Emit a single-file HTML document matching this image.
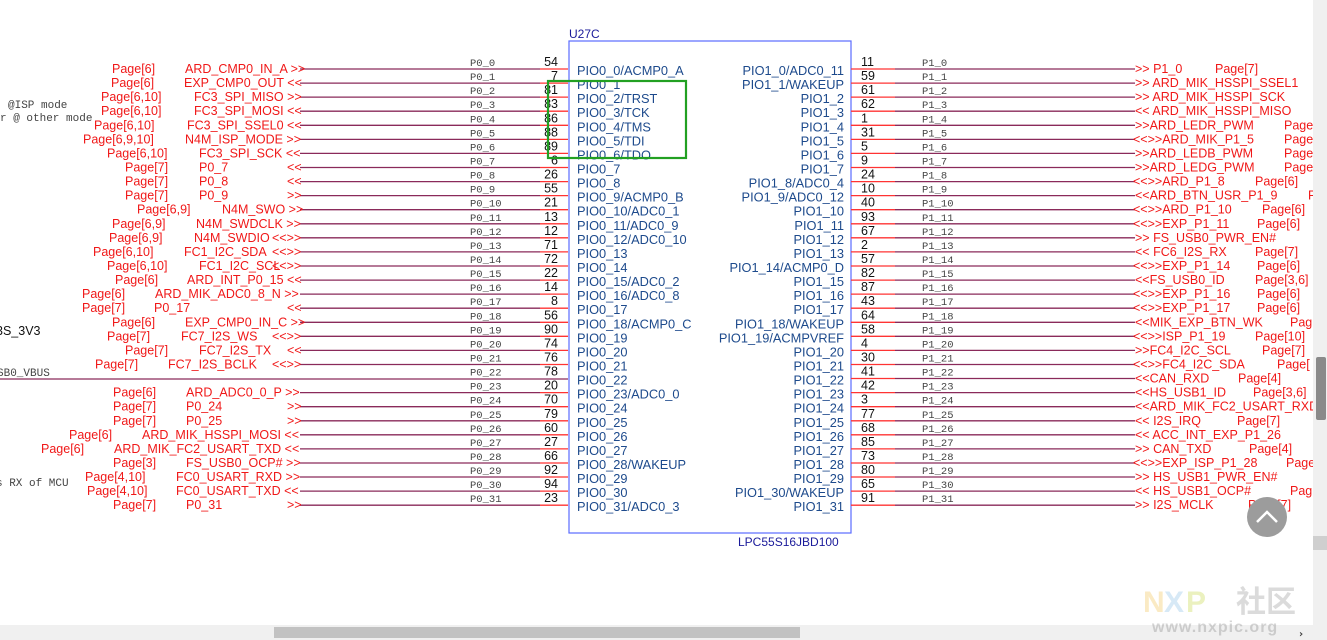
<!DOCTYPE html>
<html><head><meta charset="utf-8"><style>
html,body{margin:0;padding:0;width:1327px;height:640px;overflow:hidden;background:#fff}
svg{position:absolute;left:0;top:0}
.r{fill:#f01818;font:12.5px "Liberation Sans",sans-serif}
.n{fill:#111;font:12.5px "Liberation Sans",sans-serif}
.b{fill:#1d4a8c;font:12.8px "Liberation Sans",sans-serif}
.m{fill:#444;font:10.5px "Liberation Mono",monospace}
.e{text-anchor:end}
</style></head><body>
<svg width="1327" height="640" viewBox="0 0 1327 640">
<defs>
<g id="L"><line x1="300" y1="0" x2="540" y2="0" stroke="#8a2a5a" stroke-width="1.3"/><line x1="540" y1="0" x2="568" y2="0" stroke="#f33" stroke-width="1.3"/></g>
<g id="R"><line x1="851" y1="0" x2="895" y2="0" stroke="#f33" stroke-width="1.3"/><line x1="895" y1="0" x2="1135" y2="0" stroke="#8a2a5a" stroke-width="1.3"/></g>
</defs>
<text class="m" x="8" y="108" style="font-size:11px">@ISP mode</text>
<text class="m" x="0" y="121" style="font-size:11px">r @ other mode</text>
<text class="n" x="-4" y="335">3S_3V3</text>
<text class="m" x="-3" y="376" style="font-size:11px">SB0_VBUS</text>
<line x1="0" y1="379" x2="568" y2="379" stroke="#8a2a5a" stroke-width="1.3"/>
<text class="m" x="-4" y="486" style="font-size:11px">s RX of MCU</text>
<rect x="569" y="41" width="282" height="492" fill="none" stroke="#5a6cff" stroke-width="1.2"/>
<text x="569" y="38" style="fill:#1a1a9a;font:12px 'Liberation Sans',sans-serif">U27C</text>
<text x="738" y="546" style="fill:#1a1a9a;font:12px 'Liberation Sans',sans-serif">LPC55S16JBD100</text>

<g transform="translate(0,69)"><use href="#L"/><text class="r" x="112" y="4">Page[6]</text><text class="r" x="185" y="4">ARD_CMP0_IN_A &gt;&gt;</text><text class="m" x="470" y="-3">P0_0</text><text class="n e" x="558" y="-3">54</text><text class="b" x="577" y="6">PIO0_0/ACMP0_A</text>
<use href="#R"/><text class="n" x="861" y="-3">11</text><text class="m" x="922" y="-3">P1_0</text><text class="b e" x="844" y="6">PIO1_0/ADC0_11</text><text class="r" x="1135" y="4">&gt;&gt;   P1_0</text><text class="r" x="1215" y="4">Page[7]</text></g>
<g transform="translate(0,83.1)"><use href="#L"/><text class="r" x="111" y="4">Page[6]</text><text class="r" x="184" y="4">EXP_CMP0_OUT &lt;&lt;</text><text class="m" x="470" y="-3">P0_1</text><text class="n e" x="558" y="-3">7</text><text class="b" x="577" y="6">PIO0_1</text>
<use href="#R"/><text class="n" x="861" y="-3">59</text><text class="m" x="922" y="-3">P1_1</text><text class="b e" x="844" y="6">PIO1_1/WAKEUP</text><text class="r" x="1135" y="4">&gt;&gt;  ARD_MIK_HSSPI_SSEL1</text></g>
<g transform="translate(0,97.1)"><use href="#L"/><text class="r" x="101" y="4">Page[6,10]</text><text class="r" x="194" y="4">FC3_SPI_MISO &gt;&gt;</text><text class="m" x="470" y="-3">P0_2</text><text class="n e" x="558" y="-3">81</text><text class="b" x="577" y="6">PIO0_2/TRST</text>
<use href="#R"/><text class="n" x="861" y="-3">61</text><text class="m" x="922" y="-3">P1_2</text><text class="b e" x="844" y="6">PIO1_2</text><text class="r" x="1135" y="4">&gt;&gt;  ARD_MIK_HSSPI_SCK</text></g>
<g transform="translate(0,111.2)"><use href="#L"/><text class="r" x="101" y="4">Page[6,10]</text><text class="r" x="194" y="4">FC3_SPI_MOSI &lt;&lt;</text><text class="m" x="470" y="-3">P0_3</text><text class="n e" x="558" y="-3">83</text><text class="b" x="577" y="6">PIO0_3/TCK</text>
<use href="#R"/><text class="n" x="861" y="-3">62</text><text class="m" x="922" y="-3">P1_3</text><text class="b e" x="844" y="6">PIO1_3</text><text class="r" x="1135" y="4">&lt;&lt;  ARD_MIK_HSSPI_MISO</text></g>
<g transform="translate(0,125.3)"><use href="#L"/><text class="r" x="94" y="4">Page[6,10]</text><text class="r" x="187" y="4">FC3_SPI_SSEL0 &lt;&lt;</text><text class="m" x="470" y="-3">P0_4</text><text class="n e" x="558" y="-3">86</text><text class="b" x="577" y="6">PIO0_4/TMS</text>
<use href="#R"/><text class="n" x="861" y="-3">1</text><text class="m" x="922" y="-3">P1_4</text><text class="b e" x="844" y="6">PIO1_4</text><text class="r" x="1135" y="4">&gt;&gt;ARD_LEDR_PWM</text><text class="r" x="1284" y="4">Page[</text></g>
<g transform="translate(0,139.4)"><use href="#L"/><text class="r" x="83" y="4">Page[6,9,10]</text><text class="r" x="185" y="4">N4M_ISP_MODE &gt;&gt;</text><text class="m" x="470" y="-3">P0_5</text><text class="n e" x="558" y="-3">88</text><text class="b" x="577" y="6">PIO0_5/TDI</text>
<use href="#R"/><text class="n" x="861" y="-3">31</text><text class="m" x="922" y="-3">P1_5</text><text class="b e" x="844" y="6">PIO1_5</text><text class="r" x="1133" y="4">&lt;&lt;&gt;&gt;ARD_MIK_P1_5</text><text class="r" x="1284" y="4">Page[</text></g>
<g transform="translate(0,153.4)"><use href="#L"/><text class="r" x="107" y="4">Page[6,10]</text><text class="r" x="199" y="4">FC3_SPI_SCK &lt;&lt;</text><text class="m" x="470" y="-3">P0_6</text><text class="n e" x="558" y="-3">89</text><text class="b" x="577" y="6">PIO0_6/TDO</text>
<use href="#R"/><text class="n" x="861" y="-3">5</text><text class="m" x="922" y="-3">P1_6</text><text class="b e" x="844" y="6">PIO1_6</text><text class="r" x="1135" y="4">&gt;&gt;ARD_LEDB_PWM</text><text class="r" x="1284" y="4">Page[</text></g>
<g transform="translate(0,167.5)"><use href="#L"/><text class="r" x="125" y="4">Page[7]</text><text class="r" x="199" y="4">P0_7</text><text class="r" x="287" y="4">&lt;&lt;</text><text class="m" x="470" y="-3">P0_7</text><text class="n e" x="558" y="-3">6</text><text class="b" x="577" y="6">PIO0_7</text>
<use href="#R"/><text class="n" x="861" y="-3">9</text><text class="m" x="922" y="-3">P1_7</text><text class="b e" x="844" y="6">PIO1_7</text><text class="r" x="1135" y="4">&gt;&gt;ARD_LEDG_PWM</text><text class="r" x="1284" y="4">Page[</text></g>
<g transform="translate(0,181.6)"><use href="#L"/><text class="r" x="125" y="4">Page[7]</text><text class="r" x="199" y="4">P0_8</text><text class="r" x="287" y="4">&lt;&lt;</text><text class="m" x="470" y="-3">P0_8</text><text class="n e" x="558" y="-3">26</text><text class="b" x="577" y="6">PIO0_8</text>
<use href="#R"/><text class="n" x="861" y="-3">24</text><text class="m" x="922" y="-3">P1_8</text><text class="b e" x="844" y="6">PIO1_8/ADC0_4</text><text class="r" x="1133" y="4">&lt;&lt;&gt;&gt;ARD_P1_8</text><text class="r" x="1255" y="4">Page[6]</text></g>
<g transform="translate(0,195.6)"><use href="#L"/><text class="r" x="125" y="4">Page[7]</text><text class="r" x="199" y="4">P0_9</text><text class="r" x="287" y="4">&gt;&gt;</text><text class="m" x="470" y="-3">P0_9</text><text class="n e" x="558" y="-3">55</text><text class="b" x="577" y="6">PIO0_9/ACMP0_B</text>
<use href="#R"/><text class="n" x="861" y="-3">10</text><text class="m" x="922" y="-3">P1_9</text><text class="b e" x="844" y="6">PIO1_9/ADC0_12</text><text class="r" x="1135" y="4">&lt;&lt;ARD_BTN_USR_P1_9</text><text class="r" x="1308" y="4">P</text></g>
<g transform="translate(0,209.7)"><use href="#L"/><text class="r" x="137" y="4">Page[6,9]</text><text class="r" x="222" y="4">N4M_SWO &gt;&gt;</text><text class="m" x="470" y="-3">P0_10</text><text class="n e" x="558" y="-3">21</text><text class="b" x="577" y="6">PIO0_10/ADC0_1</text>
<use href="#R"/><text class="n" x="861" y="-3">40</text><text class="m" x="922" y="-3">P1_10</text><text class="b e" x="844" y="6">PIO1_10</text><text class="r" x="1133" y="4">&lt;&lt;&gt;&gt;ARD_P1_10</text><text class="r" x="1262" y="4">Page[6]</text></g>
<g transform="translate(0,223.8)"><use href="#L"/><text class="r" x="112" y="4">Page[6,9]</text><text class="r" x="196" y="4">N4M_SWDCLK &gt;&gt;</text><text class="m" x="470" y="-3">P0_11</text><text class="n e" x="558" y="-3">13</text><text class="b" x="577" y="6">PIO0_11/ADC0_9</text>
<use href="#R"/><text class="n" x="861" y="-3">93</text><text class="m" x="922" y="-3">P1_11</text><text class="b e" x="844" y="6">PIO1_11</text><text class="r" x="1133" y="4">&lt;&lt;&gt;&gt;EXP_P1_11</text><text class="r" x="1257" y="4">Page[6]</text></g>
<g transform="translate(0,237.8)"><use href="#L"/><text class="r" x="109" y="4">Page[6,9]</text><text class="r" x="194" y="4">N4M_SWDIO</text><text class="r" x="272" y="4">&lt;&lt;&gt;&gt;</text><text class="m" x="470" y="-3">P0_12</text><text class="n e" x="558" y="-3">12</text><text class="b" x="577" y="6">PIO0_12/ADC0_10</text>
<use href="#R"/><text class="n" x="861" y="-3">67</text><text class="m" x="922" y="-3">P1_12</text><text class="b e" x="844" y="6">PIO1_12</text><text class="r" x="1135" y="4">&gt;&gt;  FS_USB0_PWR_EN#</text></g>
<g transform="translate(0,251.9)"><use href="#L"/><text class="r" x="93" y="4">Page[6,10]</text><text class="r" x="184" y="4">FC1_I2C_SDA</text><text class="r" x="272" y="4">&lt;&lt;&gt;&gt;</text><text class="m" x="470" y="-3">P0_13</text><text class="n e" x="558" y="-3">71</text><text class="b" x="577" y="6">PIO0_13</text>
<use href="#R"/><text class="n" x="861" y="-3">2</text><text class="m" x="922" y="-3">P1_13</text><text class="b e" x="844" y="6">PIO1_13</text><text class="r" x="1135" y="4">&lt;&lt; FC6_I2S_RX</text><text class="r" x="1255" y="4">Page[7]</text></g>
<g transform="translate(0,266)"><use href="#L"/><text class="r" x="107" y="4">Page[6,10]</text><text class="r" x="199" y="4">FC1_I2C_SCL</text><text class="r" x="272" y="4">&lt;&lt;&gt;&gt;</text><text class="m" x="470" y="-3">P0_14</text><text class="n e" x="558" y="-3">72</text><text class="b" x="577" y="6">PIO0_14</text>
<use href="#R"/><text class="n" x="861" y="-3">57</text><text class="m" x="922" y="-3">P1_14</text><text class="b e" x="844" y="6">PIO1_14/ACMP0_D</text><text class="r" x="1133" y="4">&lt;&lt;&gt;&gt;EXP_P1_14</text><text class="r" x="1257" y="4">Page[6]</text></g>
<g transform="translate(0,280.1)"><use href="#L"/><text class="r" x="115" y="4">Page[6]</text><text class="r" x="187" y="4">ARD_INT_P0_15 &lt;&lt;</text><text class="m" x="470" y="-3">P0_15</text><text class="n e" x="558" y="-3">22</text><text class="b" x="577" y="6">PIO0_15/ADC0_2</text>
<use href="#R"/><text class="n" x="861" y="-3">82</text><text class="m" x="922" y="-3">P1_15</text><text class="b e" x="844" y="6">PIO1_15</text><text class="r" x="1135" y="4">&lt;&lt;FS_USB0_ID</text><text class="r" x="1255" y="4">Page[3,6]</text></g>
<g transform="translate(0,294.1)"><use href="#L"/><text class="r" x="82" y="4">Page[6]</text><text class="r" x="155" y="4">ARD_MIK_ADC0_8_N &gt;&gt;</text><text class="m" x="470" y="-3">P0_16</text><text class="n e" x="558" y="-3">14</text><text class="b" x="577" y="6">PIO0_16/ADC0_8</text>
<use href="#R"/><text class="n" x="861" y="-3">87</text><text class="m" x="922" y="-3">P1_16</text><text class="b e" x="844" y="6">PIO1_16</text><text class="r" x="1133" y="4">&lt;&lt;&gt;&gt;EXP_P1_16</text><text class="r" x="1257" y="4">Page[6]</text></g>
<g transform="translate(0,308.2)"><use href="#L"/><text class="r" x="82" y="4">Page[7]</text><text class="r" x="154" y="4">P0_17</text><text class="r" x="287" y="4">&lt;&lt;</text><text class="m" x="470" y="-3">P0_17</text><text class="n e" x="558" y="-3">8</text><text class="b" x="577" y="6">PIO0_17</text>
<use href="#R"/><text class="n" x="861" y="-3">43</text><text class="m" x="922" y="-3">P1_17</text><text class="b e" x="844" y="6">PIO1_17</text><text class="r" x="1133" y="4">&lt;&lt;&gt;&gt;EXP_P1_17</text><text class="r" x="1257" y="4">Page[6]</text></g>
<g transform="translate(0,322.3)"><use href="#L"/><text class="r" x="112" y="4">Page[6]</text><text class="r" x="185" y="4">EXP_CMP0_IN_C &gt;&gt;</text><text class="m" x="470" y="-3">P0_18</text><text class="n e" x="558" y="-3">56</text><text class="b" x="577" y="6">PIO0_18/ACMP0_C</text>
<use href="#R"/><text class="n" x="861" y="-3">64</text><text class="m" x="922" y="-3">P1_18</text><text class="b e" x="844" y="6">PIO1_18/WAKEUP</text><text class="r" x="1135" y="4">&lt;&lt;MIK_EXP_BTN_WK</text><text class="r" x="1290" y="4">Pag</text></g>
<g transform="translate(0,336.3)"><use href="#L"/><text class="r" x="107" y="4">Page[7]</text><text class="r" x="181" y="4">FC7_I2S_WS</text><text class="r" x="272" y="4">&lt;&lt;&gt;&gt;</text><text class="m" x="470" y="-3">P0_19</text><text class="n e" x="558" y="-3">90</text><text class="b" x="577" y="6">PIO0_19</text>
<use href="#R"/><text class="n" x="861" y="-3">58</text><text class="m" x="922" y="-3">P1_19</text><text class="b e" x="844" y="6">PIO1_19/ACMPVREF</text><text class="r" x="1133" y="4">&lt;&lt;&gt;&gt;ISP_P1_19</text><text class="r" x="1255" y="4">Page[10]</text></g>
<g transform="translate(0,350.4)"><use href="#L"/><text class="r" x="125" y="4">Page[7]</text><text class="r" x="199" y="4">FC7_I2S_TX</text><text class="r" x="287" y="4">&lt;&lt;</text><text class="m" x="470" y="-3">P0_20</text><text class="n e" x="558" y="-3">74</text><text class="b" x="577" y="6">PIO0_20</text>
<use href="#R"/><text class="n" x="861" y="-3">4</text><text class="m" x="922" y="-3">P1_20</text><text class="b e" x="844" y="6">PIO1_20</text><text class="r" x="1135" y="4">&gt;&gt;FC4_I2C_SCL</text><text class="r" x="1262" y="4">Page[7]</text></g>
<g transform="translate(0,364.5)"><use href="#L"/><text class="r" x="95" y="4">Page[7]</text><text class="r" x="168" y="4">FC7_I2S_BCLK</text><text class="r" x="272" y="4">&lt;&lt;&gt;&gt;</text><text class="m" x="470" y="-3">P0_21</text><text class="n e" x="558" y="-3">76</text><text class="b" x="577" y="6">PIO0_21</text>
<use href="#R"/><text class="n" x="861" y="-3">30</text><text class="m" x="922" y="-3">P1_21</text><text class="b e" x="844" y="6">PIO1_21</text><text class="r" x="1133" y="4">&lt;&lt;&gt;&gt;FC4_I2C_SDA</text><text class="r" x="1277" y="4">Page[</text></g>
<g transform="translate(0,378.5)"><text class="m" x="470" y="-3">P0_22</text><text class="n e" x="558" y="-3">78</text><text class="b" x="577" y="6">PIO0_22</text>
<use href="#R"/><text class="n" x="861" y="-3">41</text><text class="m" x="922" y="-3">P1_22</text><text class="b e" x="844" y="6">PIO1_22</text><text class="r" x="1135" y="4">&lt;&lt;CAN_RXD</text><text class="r" x="1238" y="4">Page[4]</text></g>
<g transform="translate(0,392.6)"><use href="#L"/><text class="r" x="113" y="4">Page[6]</text><text class="r" x="186" y="4">ARD_ADC0_0_P &gt;&gt;</text><text class="m" x="470" y="-3">P0_23</text><text class="n e" x="558" y="-3">20</text><text class="b" x="577" y="6">PIO0_23/ADC0_0</text>
<use href="#R"/><text class="n" x="861" y="-3">42</text><text class="m" x="922" y="-3">P1_23</text><text class="b e" x="844" y="6">PIO1_23</text><text class="r" x="1135" y="4">&lt;&lt;HS_USB1_ID</text><text class="r" x="1253" y="4">Page[3,6]</text></g>
<g transform="translate(0,406.7)"><use href="#L"/><text class="r" x="113" y="4">Page[7]</text><text class="r" x="186" y="4">P0_24</text><text class="r" x="287" y="4">&gt;&gt;</text><text class="m" x="470" y="-3">P0_24</text><text class="n e" x="558" y="-3">70</text><text class="b" x="577" y="6">PIO0_24</text>
<use href="#R"/><text class="n" x="861" y="-3">3</text><text class="m" x="922" y="-3">P1_24</text><text class="b e" x="844" y="6">PIO1_24</text><text class="r" x="1135" y="4">&lt;&lt;ARD_MIK_FC2_USART_RXD</text></g>
<g transform="translate(0,420.8)"><use href="#L"/><text class="r" x="113" y="4">Page[7]</text><text class="r" x="186" y="4">P0_25</text><text class="r" x="287" y="4">&gt;&gt;</text><text class="m" x="470" y="-3">P0_25</text><text class="n e" x="558" y="-3">79</text><text class="b" x="577" y="6">PIO0_25</text>
<use href="#R"/><text class="n" x="861" y="-3">77</text><text class="m" x="922" y="-3">P1_25</text><text class="b e" x="844" y="6">PIO1_25</text><text class="r" x="1135" y="4">&lt;&lt;  I2S_IRQ</text><text class="r" x="1237" y="4">Page[7]</text></g>
<g transform="translate(0,434.8)"><use href="#L"/><text class="r" x="69" y="4">Page[6]</text><text class="r" x="142" y="4">ARD_MIK_HSSPI_MOSI &lt;&lt;</text><text class="m" x="470" y="-3">P0_26</text><text class="n e" x="558" y="-3">60</text><text class="b" x="577" y="6">PIO0_26</text>
<use href="#R"/><text class="n" x="861" y="-3">68</text><text class="m" x="922" y="-3">P1_26</text><text class="b e" x="844" y="6">PIO1_26</text><text class="r" x="1135" y="4">&lt;&lt;  ACC_INT_EXP_P1_26</text></g>
<g transform="translate(0,448.9)"><use href="#L"/><text class="r" x="41" y="4">Page[6]</text><text class="r" x="114" y="4">ARD_MIK_FC2_USART_TXD &lt;&lt;</text><text class="m" x="470" y="-3">P0_27</text><text class="n e" x="558" y="-3">27</text><text class="b" x="577" y="6">PIO0_27</text>
<use href="#R"/><text class="n" x="861" y="-3">85</text><text class="m" x="922" y="-3">P1_27</text><text class="b e" x="844" y="6">PIO1_27</text><text class="r" x="1135" y="4">&gt;&gt;  CAN_TXD</text><text class="r" x="1249" y="4">Page[4]</text></g>
<g transform="translate(0,463)"><use href="#L"/><text class="r" x="113" y="4">Page[3]</text><text class="r" x="186" y="4">FS_USB0_OCP# &gt;&gt;</text><text class="m" x="470" y="-3">P0_28</text><text class="n e" x="558" y="-3">66</text><text class="b" x="577" y="6">PIO0_28/WAKEUP</text>
<use href="#R"/><text class="n" x="861" y="-3">73</text><text class="m" x="922" y="-3">P1_28</text><text class="b e" x="844" y="6">PIO1_28</text><text class="r" x="1133" y="4">&lt;&lt;&gt;&gt;EXP_ISP_P1_28</text><text class="r" x="1286" y="4">Page</text></g>
<g transform="translate(0,477)"><use href="#L"/><text class="r" x="85" y="4">Page[4,10]</text><text class="r" x="176" y="4">FC0_USART_RXD &gt;&gt;</text><text class="m" x="470" y="-3">P0_29</text><text class="n e" x="558" y="-3">92</text><text class="b" x="577" y="6">PIO0_29</text>
<use href="#R"/><text class="n" x="861" y="-3">80</text><text class="m" x="922" y="-3">P1_29</text><text class="b e" x="844" y="6">PIO1_29</text><text class="r" x="1135" y="4">&gt;&gt;  HS_USB1_PWR_EN#</text></g>
<g transform="translate(0,491.1)"><use href="#L"/><text class="r" x="87" y="4">Page[4,10]</text><text class="r" x="176" y="4">FC0_USART_TXD &lt;&lt;</text><text class="m" x="470" y="-3">P0_30</text><text class="n e" x="558" y="-3">94</text><text class="b" x="577" y="6">PIO0_30</text>
<use href="#R"/><text class="n" x="861" y="-3">65</text><text class="m" x="922" y="-3">P1_30</text><text class="b e" x="844" y="6">PIO1_30/WAKEUP</text><text class="r" x="1135" y="4">&lt;&lt;  HS_USB1_OCP#</text><text class="r" x="1290" y="4">Pag</text></g>
<g transform="translate(0,505.2)"><use href="#L"/><text class="r" x="113" y="4">Page[7]</text><text class="r" x="186" y="4">P0_31</text><text class="r" x="287" y="4">&gt;&gt;</text><text class="m" x="470" y="-3">P0_31</text><text class="n e" x="558" y="-3">23</text><text class="b" x="577" y="6">PIO0_31/ADC0_3</text>
<use href="#R"/><text class="n" x="861" y="-3">91</text><text class="m" x="922" y="-3">P1_31</text><text class="b e" x="844" y="6">PIO1_31</text><text class="r" x="1135" y="4">&gt;&gt; I2S_MCLK</text><text class="r" x="1248" y="4">Page[7]</text></g>

<rect x="548" y="81" width="138" height="77" fill="none" stroke="#22a022" stroke-width="2.2"/>

<rect x="1313" y="0" width="14" height="640" fill="#f0f0f0"/>
<rect x="1316" y="357" width="10" height="63" rx="2" fill="#8a8a8a"/>
<rect x="1313" y="536" width="14" height="14" fill="#cfcfcf"/>
<rect x="0" y="625" width="1313" height="15" fill="#f0f0f0"/>
<rect x="274" y="627" width="526" height="11" fill="#c2c2c2"/>
<text x="1299" y="637" style="fill:#444;font:bold 10px 'DejaVu Sans',sans-serif">›</text>

<circle cx="1267" cy="517" r="20" fill="#9c9c9c"/>
<polyline points="1257,522 1267,512 1277,522" fill="none" stroke="#fff" stroke-width="2.5"/>

<g opacity="0.35">
<text x="1143" y="612" style="font:bold 30px 'Liberation Sans',sans-serif;fill:#f2c65a">N</text>
<text x="1164" y="612" style="font:bold 30px 'Liberation Sans',sans-serif;fill:#8ec3e8">X</text>
<text x="1186" y="612" style="font:bold 30px 'Liberation Sans',sans-serif;fill:#c8d84a">P</text>
<text x="1236" y="612" style="font:bold 30px 'Noto Sans CJK SC',sans-serif;fill:#999">社区</text>
<text x="1152" y="632" style="font:bold 16px 'Liberation Sans',sans-serif;fill:#888;letter-spacing:1px">www.nxpic.org</text>
</g>
</svg>
</body></html>
